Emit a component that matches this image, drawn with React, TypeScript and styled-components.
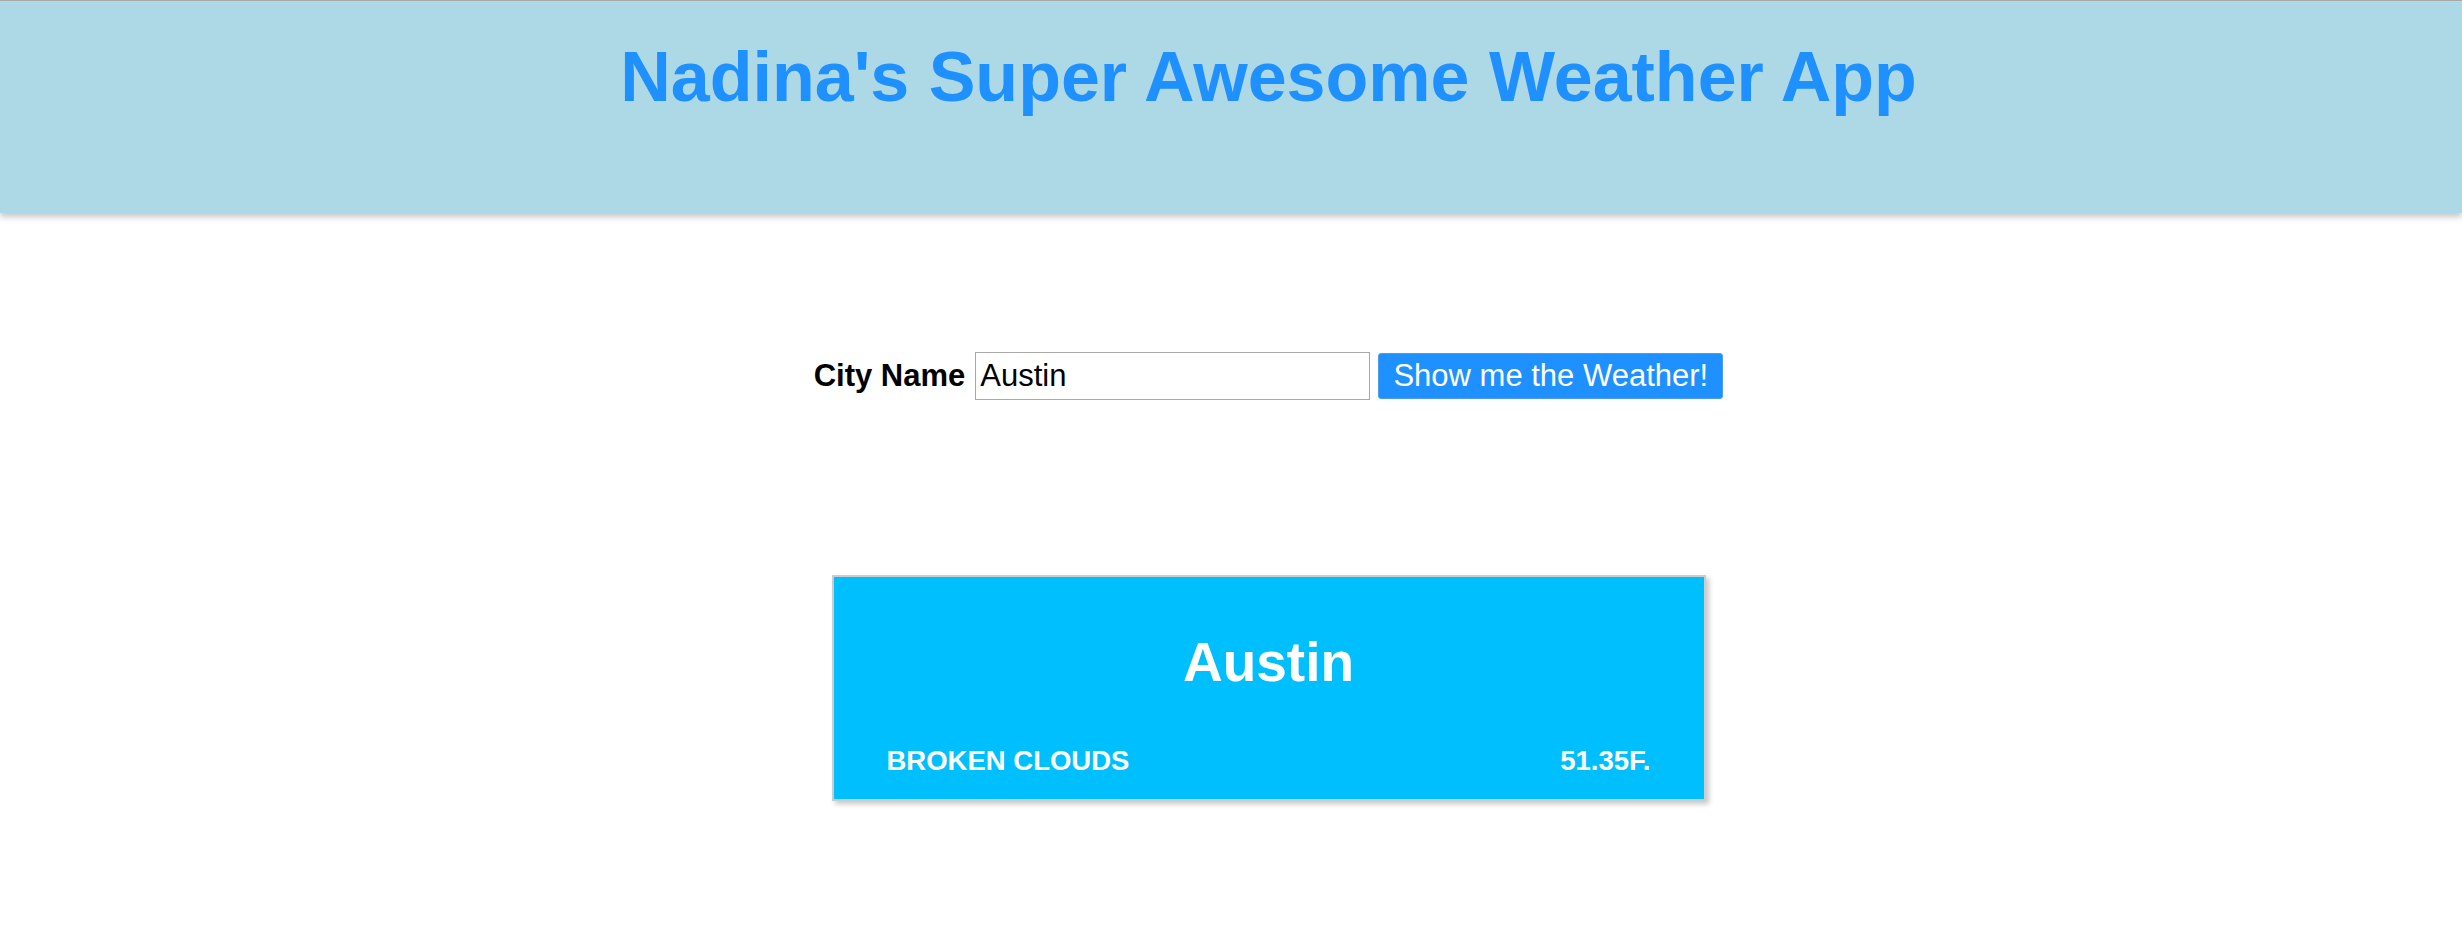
import React from "react";
import styled, { createGlobalStyle } from "styled-components";

const GlobalStyle = createGlobalStyle`
  html, body {
    margin: 0;
    padding: 0;
    background: #ffffff;
    font-family: "Liberation Sans", Arial, sans-serif;
  }
  * { box-sizing: border-box; }
`;

const Page = styled.div`
  width: 2462px;
  min-height: 948px;
  background: #ffffff;
`;

const Header = styled.header`
  position: relative;
  z-index: 1;
  height: 213px;
  border-top: 1px solid #a9a9a9;
  background: #add8e6;
  box-shadow: 0 4px 6px rgba(0, 0, 0, 0.22);
  padding: 41px 0 0 75px;
`;

const Title = styled.h1`
  margin: 0;
  text-align: center;
  font-size: 70px;
  line-height: 70px;
  font-weight: 700;
  color: #1e90ff;
`;

const Main = styled.main`
  padding: 139px 0 0 75px;
  display: flex;
  flex-direction: column;
  align-items: center;
`;

const Form = styled.form`
  display: flex;
  align-items: center;
  height: 48px;
`;

const Label = styled.label`
  font-size: 31px;
  font-weight: 700;
  color: #000;
  margin-right: 10px;
`;

const Input = styled.input`
  width: 395px;
  height: 48px;
  border: 1px solid #a9a9a9;
  padding: 0 4px;
  font-family: "Liberation Sans", Arial, sans-serif;
  font-size: 31px;
  color: #000;
  outline: none;
  margin-right: 8px;
`;

const Button = styled.button`
  width: 345px;
  height: 46px;
  padding: 0;
  border: 1px solid #4a9cf5;
  border-radius: 3px;
  background: #1e90ff;
  color: #ffffff;
  font-family: "Liberation Sans", Arial, sans-serif;
  font-size: 31px;
  cursor: pointer;
`;

const Card = styled.section`
  margin-top: 175px;
  width: 874px;
  border: 2px solid #cccccc;
  background: #00bfff;
  box-shadow: 3px 3px 5px rgba(0, 0, 0, 0.22);
  padding: 58px 53px 24px;
  color: #ffffff;
`;

const City = styled.h2`
  margin: 0;
  text-align: center;
  font-size: 55px;
  line-height: 55px;
  font-weight: 700;
`;

const InfoRow = styled.div`
  margin-top: 57px;
  display: flex;
  justify-content: space-between;
  font-size: 27.5px;
  line-height: 27.5px;
  font-weight: 700;
  text-transform: uppercase;
`;

export default function App() {
  return (
    <Page>
      <GlobalStyle />
      <Header>
        <Title>Nadina's Super Awesome Weather App</Title>
      </Header>
      <Main>
        <Form onSubmit={(e) => e.preventDefault()}>
          <Label htmlFor="city">City Name</Label>
          <Input id="city" defaultValue="Austin" />
          <Button type="submit">Show me the Weather!</Button>
        </Form>
        <Card>
          <City>Austin</City>
          <InfoRow>
            <span>broken clouds</span>
            <span>51.35F.</span>
          </InfoRow>
        </Card>
      </Main>
    </Page>
  );
}
